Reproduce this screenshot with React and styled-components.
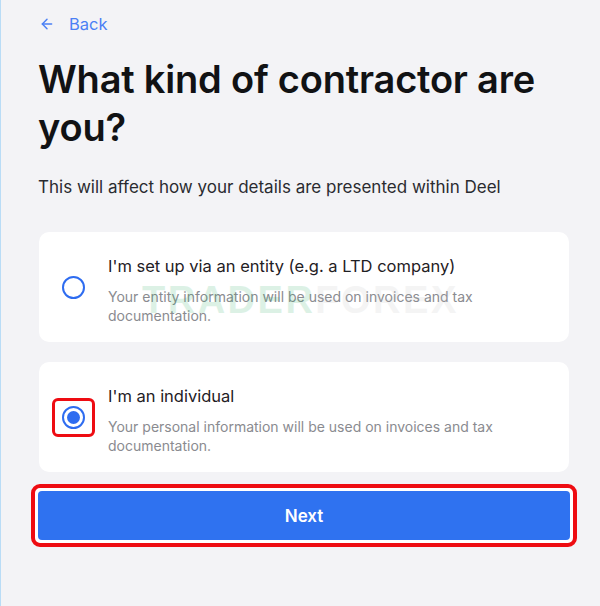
import React, { useState } from "react";
import styled, { createGlobalStyle } from "styled-components";

const GlobalStyle = createGlobalStyle`
  html, body {
    margin: 0;
    padding: 0;
    background: #f3f3f6;
  }
  body {
    font-family: Inter, "Noto Sans", Arial, sans-serif;
    -webkit-font-smoothing: antialiased;
  }
`;

const options = [
  {
    id: "entity",
    title: "I'm set up via an entity (e.g. a LTD company)",
    text: "Your entity information will be used on invoices and tax documentation.",
  },
  {
    id: "individual",
    title: "I'm an individual",
    text: "Your personal information will be used on invoices and tax documentation.",
  },
];

const App = () => {
  const [selected, setSelected] = useState("individual");

  return (
    <>
      <GlobalStyle />
      <Page>
        <BackLink href="#">
          <svg width="16" height="16" viewBox="0 0 24 24" fill="none" stroke="currentColor" strokeWidth="2.2" strokeLinecap="round" strokeLinejoin="round">
            <path d="M19 12H5" />
            <path d="M12 19l-7-7 7-7" />
          </svg>
          <span>Back</span>
        </BackLink>
        <Heading>What kind of contractor are you?</Heading>
        <Subtitle>This will affect how your details are presented within Deel</Subtitle>

        <OptionList>
          {options.map((opt) => (
            <OptionCard key={opt.id} onClick={() => setSelected(opt.id)}>
              <RadioSlot $highlight={opt.id === "individual"}>
                <Radio $checked={selected === opt.id} />
              </RadioSlot>
              <OptionBody>
                <OptionTitle>{opt.title}</OptionTitle>
                <OptionText>{opt.text}</OptionText>
              </OptionBody>
            </OptionCard>
          ))}
          <Watermark>
            <WmGreen>TRADER</WmGreen>
            <WmGrey>FOREX</WmGrey>
          </Watermark>
        </OptionList>

        <ButtonFrame>
          <NextButton>Next</NextButton>
        </ButtonFrame>
      </Page>
    </>
  );
};

const Page = styled.div`
  box-sizing: border-box;
  width: 600px;
  min-height: 606px;
  border-left: 1px solid #b9dcf6;
  padding: 12px 31px 0 37px;
`;

const BackLink = styled.a`
  display: inline-flex;
  align-items: center;
  gap: 14px;
  height: 24px;
  color: #4b80f5;
  text-decoration: none;
  font-size: 16.5px;
  svg {
    margin-left: 1px;
  }
`;

const Heading = styled.h1`
  margin: 19px 0 0;
  font-size: 38px;
  line-height: 48px;
  font-weight: 600;
  color: #111214;
  letter-spacing: -0.2px;
  max-width: 530px;
`;

const Subtitle = styled.p`
  margin: 26px 0 0;
  font-size: 17px;
  line-height: 20px;
  color: #2a2b30;
`;

const OptionList = styled.div`
  position: relative;
  margin-top: 35px;
  display: flex;
  flex-direction: column;
  gap: 20px;
  padding-left: 1px;
`;

const OptionCard = styled.div`
  box-sizing: border-box;
  height: 110px;
  background: #ffffff;
  border-radius: 10px;
  display: flex;
  align-items: center;
  padding: 0 20px 0 13px;
  cursor: pointer;
`;

const RadioSlot = styled.div`
  box-sizing: border-box;
  width: 43px;
  height: 39px;
  flex: none;
  display: flex;
  align-items: center;
  justify-content: center;
  border-radius: 6px;
  border: 3px solid ${({ $highlight }) => ($highlight ? "#ee0c12" : "transparent")};
  margin-right: 13px;
`;

const Radio = styled.span`
  box-sizing: border-box;
  width: 23px;
  height: 23px;
  border-radius: 50%;
  border: 2px solid #2e6cf0;
  display: flex;
  align-items: center;
  justify-content: center;
  &::after {
    content: "";
    display: ${({ $checked }) => ($checked ? "block" : "none")};
    width: 13px;
    height: 13px;
    border-radius: 50%;
    background: #2e6cf0;
  }
`;

const OptionBody = styled.div`
  display: flex;
  flex-direction: column;
  gap: 11px;
  margin-top: 7px;
`;

const OptionTitle = styled.div`
  font-size: 16.5px;
  line-height: 20px;
  color: #1f2024;
`;

const OptionText = styled.div`
  font-size: 14px;
  line-height: 19px;
  color: #8a8b90;
  max-width: 400px;
`;

const Watermark = styled.div`
  position: absolute;
  left: 104px;
  top: 47px;
  font-family: "Liberation Sans", Arial, sans-serif;
  font-weight: 700;
  font-size: 38px;
  letter-spacing: 2.5px;
  pointer-events: none;
  opacity: 0.15;
`;

const WmGreen = styled.span`
  color: #1ea65a;
`;

const WmGrey = styled.span`
  color: #b8b8b8;
`;

const ButtonFrame = styled.div`
  box-sizing: border-box;
  margin: 12px 0 0 -7px;
  width: 546px;
  padding: 3px;
  border: 4px solid #ee0c12;
  border-radius: 9px;
  background: #ffffff;
`;

const NextButton = styled.button`
  display: block;
  width: 100%;
  height: 49px;
  border: none;
  border-radius: 4px;
  background: #2f72f0;
  color: #ffffff;
  font-family: Inter, "Noto Sans", Arial, sans-serif;
  font-size: 17px;
  font-weight: 600;
  cursor: pointer;
`;

export default App;
